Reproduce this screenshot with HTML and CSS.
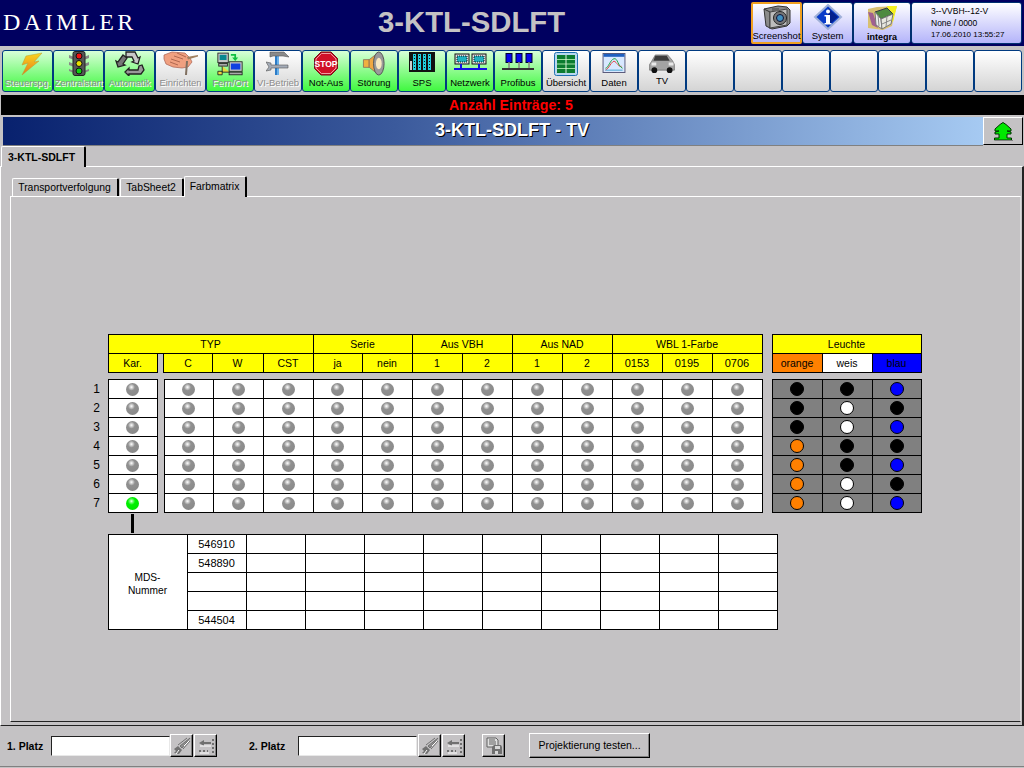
FILE: index.html
```html
<!DOCTYPE html>
<html lang="de">
<head>
<meta charset="utf-8">
<title>3-KTL-SDLFT</title>
<link rel="stylesheet" href="styles.css">
</head>
<body>
<div class="app">
<header class="top">
  <div class="logo">DAIMLER</div>
  <div class="plant">3-KTL-SDLFT</div>
  <div class="top-btns">
    <div class="tbtn w51 focus">
      <svg width="32" height="26" viewBox="0 0 32 26"><path d="M3 5l14-3 9 1 3 3v13l-3 3-15 3-6-3z" fill="#8a8a8a" stroke="#333"/><path d="M3 5l6 3v17" fill="none" stroke="#333"/><path d="M9 8l17-3v16l-17 3z" fill="#bdbdbd" stroke="#444"/><circle cx="19" cy="14" r="6.500" fill="#777" stroke="#222"/><circle cx="19" cy="14" r="3.500" fill="#3f8fc0" stroke="#113"/><rect x="11" y="4" width="7" height="3" fill="#666"/></svg>
      <span>Screenshot</span></div>
    <div class="tbtn w51">
      <svg width="32" height="26" viewBox="0 0 32 26"><path d="M16 1l13 12-13 12L3 13z" fill="#0a3cc8" stroke="#9fb0d8" stroke-width="2"/><path d="M16 4l10 9-10 9z" fill="#04208c"/><circle cx="16" cy="7.500" r="2" fill="#fff"/><path d="M14 11h4v8h1.500v1.500h-7V19H14v-6.500h-1.500V11z" fill="#fff"/></svg>
      <span>System</span></div>
    <div class="tbtn w58">
      <svg width="34" height="28" viewBox="0 0 34 28"><path d="M3 5l9-2 20-1-3 10-2 10-9 4-15-2z" fill="#d8c070"/><path d="M22 2l10 0-4 16-3-4z" fill="#f4f020"/><path d="M3 8l4 13 6 3-5-15z" fill="#a06090"/><path d="M10 8l12-4 6 6-12 5z" fill="#4e8a40" stroke="#334"/><path d="M10 8l6 7 1 10-6-4z" fill="#eee" stroke="#777"/><path d="M16 15l12-5-2 10-9 5z" fill="#e8e8e0" stroke="#777"/><path d="M13 11l1 11M22 12l-1 11M17 20l9-4" stroke="#888" fill="none"/></svg>
      <span class="b">integra</span></div>
    <div class="tbtn info"><p>3--VVBH--12-V</p><p>None / 0000</p><p class="date">17.06.2010 13:55:27</p></div>
  </div>
</header>

<nav class="toolbar">
  <div class="tool green w51 off">
    <svg width="30" height="25" viewBox="0 0 30 25"><defs><linearGradient id="bolt" x1="0" y1="0" x2="0" y2="1"><stop offset="0" stop-color="#f8d820"/><stop offset="1" stop-color="#e87818"/></linearGradient></defs><path d="M13 5l16-3-8 9 5-1-17 14 6-12-6 2z" fill="url(#bolt)" stroke="#b89a30" stroke-width=".5"/></svg>
    <span>Steuerspg.</span></div>
  <div class="tool green w51 off">
    <svg width="30" height="25" viewBox="0 0 30 25"><path d="M5 4l5 2v3l-5-2zM25 4l-5 2v3l5-2zM5 11l5 2v3l-5-2zM25 11l-5 2v3l5-2zM5 18l5 2v2l-5-2zM25 18l-5 2v2l5-2z" fill="#888"/><rect x="9" y="0.500" width="12" height="24" rx="2" fill="#555" stroke="#222"/><circle cx="15" cy="5" r="3" fill="#f01010" stroke="#111"/><circle cx="15" cy="12.500" r="3" fill="#e8e000" stroke="#111"/><circle cx="15" cy="20" r="3" fill="#10d010" stroke="#111"/></svg>
    <span>Zentralstart</span></div>
  <div class="tool green w51 off">
    <svg width="30" height="25" viewBox="0 0 30 25"><g stroke="#222" stroke-width="1.300"><path d="M11 1h9l3 6 2-1-2 7-6-2 2-1-2-4h-5l-1 2z" fill="#c8c8c8"/><path d="M8 4l4 3-4 6 2 1-7 2-2-6 2 1z" fill="#777"/><path d="M27 14l2 5-3 4H14v2l-4-4 4-4v2h9l1-4z" fill="#999"/></g></svg>
    <span>Automatik</span></div>
  <div class="tool white w51 off">
    <svg width="36" height="25" viewBox="0 0 36 25"><path d="M1 4l8-3 13 1 5 5 2 4-4 5-6 1-9-1-7-3-2-5z" fill="#f0a080" stroke="#a86050" stroke-width=".7"/><path d="M11 5l9 3M8 8l9 3M14 2l9 4M7 11l8 3" stroke="#b06850" fill="none"/><path d="M24 6l11-2v1.500l-10 3z" fill="#a08060"/><path d="M23 10l2 0-1 14h-2z" fill="#807060"/></svg>
    <span>Einrichten</span></div>
  <div class="tool green w48 off">
    <svg width="26" height="25" viewBox="0 0 30 28"><rect x="1" y="2" width="12" height="11" fill="#c8c8c8" stroke="#222"/><rect x="3" y="4" width="8" height="6" fill="#088890"/><rect x="2" y="14" width="10" height="3" fill="#aaa" stroke="#222"/><path d="M6 17v7h9M1 23h5v4H1z" fill="#e8d840" stroke="#222"/><rect x="14" y="12" width="15" height="11" fill="#c8c8c8" stroke="#222"/><rect x="16" y="14" width="11" height="7" fill="#1040e0"/><rect x="14" y="24" width="15" height="3" fill="#aaa" stroke="#222"/><path d="M16 3h6v4h2.500l-3.500 4-3.500-4H20V5h-4z" fill="#10c040"/></svg>
    <span>Fern/Ort</span></div>
  <div class="tool white w48 off">
    <svg width="24" height="25" viewBox="0 0 24 25"><rect x="9" y="5" width="4" height="19" fill="#2c7cc8"/><rect x="11" y="5" width="2" height="19" fill="#6ab0e8"/><path d="M4 1h14l5 5-6-1H7L4 6z" fill="#8a8a8a" stroke="#555" stroke-width=".6"/><path d="M0 11l5 1v2h17v3H5v2l-5 1 3-4z" fill="#a4acb8" stroke="#555" stroke-width=".6"/></svg>
    <span>VI-Betrieb</span></div>
  <div class="tool green w48">
    <svg width="24" height="25" viewBox="0 0 24 24"><path d="M7 .5h10l6.500 6.500v10L17 23.500H7L.5 17V7z" fill="#d01028" stroke="#701018"/><path d="M7.500 2h9l5.500 5.500v9L16.500 22h-9L2 16.500v-9z" fill="none" stroke="#f8c0c0" stroke-width=".8"/><text x="12" y="15.500" class="stop">STOP</text></svg>
    <span>Not-Aus</span></div>
  <div class="tool green w48">
    <svg width="24" height="25" viewBox="0 0 24 26"><path d="M1 9h6v8H1z" fill="#f0b040" stroke="#865" stroke-width=".8"/><path d="M7 9l9-7v22l-9-7z" fill="#f0a840" stroke="#865" stroke-width=".8"/><ellipse cx="17" cy="13" rx="5.500" ry="12" fill="#9a9a9a" stroke="#555"/><ellipse cx="17" cy="13" rx="3" ry="6" fill="#f8e8c0"/></svg>
    <span>Störung</span></div>
  <div class="tool green w48">
    <svg width="26" height="20" viewBox="0 0 26 20" class="pad"><rect width="26" height="20" fill="#111"/><g fill="#20d0e0"><rect x="4" y="2" width="3" height="16"/><rect x="9" y="2" width="3" height="16"/><rect x="14" y="2" width="3" height="16"/><rect x="19" y="2" width="3" height="16"/></g><path d="M2 3v14M5.500 3v14M10.500 3v14M15.500 3v14M20.500 3v14" stroke="#111" stroke-dasharray="1 2"/><rect x="1" y="9" width="2" height="9" fill="#ccc"/></svg>
    <span>SPS</span></div>
  <div class="tool green w48">
    <svg width="33" height="18" viewBox="0 0 33 18" class="pad3"><rect x="1" y="1" width="14" height="10" fill="#ddd" stroke="#111"/><rect x="3" y="3" width="10" height="6" fill="#20b0c0" stroke="#111" stroke-dasharray="1 1"/><rect x="18" y="1" width="14" height="10" fill="#ddd" stroke="#111"/><rect x="20" y="3" width="10" height="6" fill="#20b0c0" stroke="#111" stroke-dasharray="1 1"/><path d="M7 11v5M25 11v5" stroke="#1010e0" stroke-width="2"/><rect y="15" width="33" height="2" fill="#1010e0"/></svg>
    <span>Netzwerk</span></div>
  <div class="tool green w48">
    <svg width="32" height="18" viewBox="0 0 32 18" class="pad3"><rect x="4" y="0.500" width="6" height="9" fill="#0808e8" stroke="#003"/><rect x="14" y="0.500" width="6" height="9" fill="#0808e8" stroke="#003"/><rect x="24" y="0.500" width="6" height="9" fill="#0808e8" stroke="#003"/><path d="M7 9v7M17 9v7M27 9v7" stroke="#888" stroke-width="1.500"/><rect y="15" width="32" height="2" fill="#333"/></svg>
    <span>Profibus</span></div>
  <div class="tool white w48">
    <svg width="24" height="24" viewBox="0 0 24 24"><rect x=".5" y=".5" width="23" height="23" rx="2" fill="#b8d8f0" stroke="#2070b0"/><rect x="3" y="3" width="18" height="18" fill="#0c7c30"/><path d="M3 7.500h18M3 12h18M3 16.500h18" stroke="#a0e0a0"/><path d="M12 3v18" stroke="#e0f0e0"/></svg>
    <span>Übersicht</span></div>
  <div class="tool white w48">
    <svg width="24" height="20" viewBox="0 0 24 21" class="pad2"><rect x=".5" y=".5" width="23" height="20" fill="#d8e8ff" stroke="#557"/><rect x="1" y="1" width="22" height="3" fill="#2060c0"/><path d="M3 18c4-2 5-7 8-9s5 6 9 5" fill="none" stroke="#e04040"/><path d="M3 16c3 0 5-9 9-10s4 8 9 10" fill="none" stroke="#20a040"/><path d="M3 18h18" stroke="#40a0d0"/></svg>
    <span>Daten</span></div>
  <div class="tool white w48 tv">
    <svg width="28" height="21" viewBox="0 0 28 22"><path d="M1 12l2-3 4-7h13l5 6 2 4v6H1z" fill="#a4a4a4" stroke="#555" stroke-width=".6"/><path d="M7 3h12l3 5H5z" fill="#3c3c3c"/><path d="M3 10h5v3H3zM21 10h5v3h-5z" fill="#e8e8e8"/><circle cx="6" cy="18" r="3" fill="#111"/><circle cx="22" cy="18" r="3" fill="#111"/></svg>
    <span>TV</span></div>
  <div class="tool white w48"></div>
  <div class="tool white w48"></div>
  <div class="tool white w48"></div>
  <div class="tool white w48"></div>
  <div class="tool white w48"></div>
  <div class="tool white w48"></div>
  <div class="tool white w48"></div>
</nav>

<div class="alert">Anzahl Einträge: 5</div>

<div class="title-row">
  <div class="title-bar">3-KTL-SDLFT - TV</div>
  <div class="up-btn"><svg width="20" height="19" viewBox="0 0 20 19"><path d="M10 .5l3 2 5 4.500v2h-4l4 1v2h-4v4h4.500v2H1.500v-2H6v-4H2v-2l4-1H2V7l5-4.500z" fill="#00e800" stroke="#003000"/><path d="M2 18.500h18" stroke="#808080"/></svg></div>
</div>

<div class="outer-tabs"><div class="outer-tab">3-KTL-SDLFT</div></div>

<main class="outer-page">
  <div class="inner-tabs">
    <div class="inner-tab t1">Transportverfolgung</div>
    <div class="inner-tab t2">TabSheet2</div>
    <div class="inner-tab active">Farbmatrix</div>
  </div>
  <section class="inner-page">
    <div class="matrix">
      <div class="c y c-typ">TYP</div>
      <div class="c y c-ser">Serie</div>
      <div class="c y c-vbh">Aus VBH</div>
      <div class="c y c-nad">Aus NAD</div>
      <div class="c y c-wbl">WBL 1-Farbe</div>
      <div class="c y c-leu">Leuchte</div>

      <div class="c y c-kar">Kar.</div>
      <div class="c y c-first sh1">C</div><div class="c y sh1">W</div><div class="c y">CST</div><div class="c y">ja</div><div class="c y">nein</div><div class="c y">1</div><div class="c y">2</div><div class="c y">1</div><div class="c y">2</div><div class="c y n">0153</div><div class="c y n">0195</div><div class="c y n">0706</div>
      <div class="c orange c-lamp">orange</div><div class="c white">weis</div><div class="c blue">blau</div>

      <div class="vgap"></div>

      <div class="lbl">1</div><div class="c c-kar"><i class="led"></i></div>
      <div class="c c-first"><i class="led"></i></div><div class="c"><i class="led"></i></div><div class="c"><i class="led"></i></div><div class="c"><i class="led"></i></div><div class="c"><i class="led"></i></div><div class="c"><i class="led"></i></div><div class="c"><i class="led"></i></div><div class="c"><i class="led"></i></div><div class="c"><i class="led"></i></div><div class="c"><i class="led"></i></div><div class="c"><i class="led"></i></div><div class="c"><i class="led"></i></div>
      <div class="c g c-lamp"><i class="dot d-k"></i></div><div class="c g"><i class="dot d-k"></i></div><div class="c g"><i class="dot d-b"></i></div>

      <div class="lbl">2</div><div class="c c-kar"><i class="led"></i></div>
      <div class="c c-first"><i class="led"></i></div><div class="c"><i class="led"></i></div><div class="c"><i class="led"></i></div><div class="c"><i class="led"></i></div><div class="c"><i class="led"></i></div><div class="c"><i class="led"></i></div><div class="c"><i class="led"></i></div><div class="c"><i class="led"></i></div><div class="c"><i class="led"></i></div><div class="c"><i class="led"></i></div><div class="c"><i class="led"></i></div><div class="c"><i class="led"></i></div>
      <div class="c g c-lamp"><i class="dot d-k"></i></div><div class="c g"><i class="dot d-w"></i></div><div class="c g"><i class="dot d-k"></i></div>

      <div class="lbl">3</div><div class="c c-kar"><i class="led"></i></div>
      <div class="c c-first"><i class="led"></i></div><div class="c"><i class="led"></i></div><div class="c"><i class="led"></i></div><div class="c"><i class="led"></i></div><div class="c"><i class="led"></i></div><div class="c"><i class="led"></i></div><div class="c"><i class="led"></i></div><div class="c"><i class="led"></i></div><div class="c"><i class="led"></i></div><div class="c"><i class="led"></i></div><div class="c"><i class="led"></i></div><div class="c"><i class="led"></i></div>
      <div class="c g c-lamp"><i class="dot d-k"></i></div><div class="c g"><i class="dot d-w"></i></div><div class="c g"><i class="dot d-b"></i></div>

      <div class="lbl">4</div><div class="c c-kar"><i class="led"></i></div>
      <div class="c c-first"><i class="led"></i></div><div class="c"><i class="led"></i></div><div class="c"><i class="led"></i></div><div class="c"><i class="led"></i></div><div class="c"><i class="led"></i></div><div class="c"><i class="led"></i></div><div class="c"><i class="led"></i></div><div class="c"><i class="led"></i></div><div class="c"><i class="led"></i></div><div class="c"><i class="led"></i></div><div class="c"><i class="led"></i></div><div class="c"><i class="led"></i></div>
      <div class="c g c-lamp"><i class="dot d-o"></i></div><div class="c g"><i class="dot d-k"></i></div><div class="c g"><i class="dot d-k"></i></div>

      <div class="lbl">5</div><div class="c c-kar"><i class="led"></i></div>
      <div class="c c-first"><i class="led"></i></div><div class="c"><i class="led"></i></div><div class="c"><i class="led"></i></div><div class="c"><i class="led"></i></div><div class="c"><i class="led"></i></div><div class="c"><i class="led"></i></div><div class="c"><i class="led"></i></div><div class="c"><i class="led"></i></div><div class="c"><i class="led"></i></div><div class="c"><i class="led"></i></div><div class="c"><i class="led"></i></div><div class="c"><i class="led"></i></div>
      <div class="c g c-lamp"><i class="dot d-o"></i></div><div class="c g"><i class="dot d-k"></i></div><div class="c g"><i class="dot d-b"></i></div>

      <div class="lbl">6</div><div class="c c-kar"><i class="led"></i></div>
      <div class="c c-first"><i class="led"></i></div><div class="c"><i class="led"></i></div><div class="c"><i class="led"></i></div><div class="c"><i class="led"></i></div><div class="c"><i class="led"></i></div><div class="c"><i class="led"></i></div><div class="c"><i class="led"></i></div><div class="c"><i class="led"></i></div><div class="c"><i class="led"></i></div><div class="c"><i class="led"></i></div><div class="c"><i class="led"></i></div><div class="c"><i class="led"></i></div>
      <div class="c g c-lamp"><i class="dot d-o"></i></div><div class="c g"><i class="dot d-w"></i></div><div class="c g"><i class="dot d-k"></i></div>

      <div class="lbl">7</div><div class="c c-kar"><i class="led on"></i></div>
      <div class="c c-first"><i class="led"></i></div><div class="c"><i class="led"></i></div><div class="c"><i class="led"></i></div><div class="c"><i class="led"></i></div><div class="c"><i class="led"></i></div><div class="c"><i class="led"></i></div><div class="c"><i class="led"></i></div><div class="c"><i class="led"></i></div><div class="c"><i class="led"></i></div><div class="c"><i class="led"></i></div><div class="c"><i class="led"></i></div><div class="c"><i class="led"></i></div>
      <div class="c g c-lamp"><i class="dot d-o"></i></div><div class="c g"><i class="dot d-w"></i></div><div class="c g"><i class="dot d-b"></i></div>
    </div>

    <div class="connector"></div>

    <div class="mds">
      <div class="c m-head">MDS-<br>Nummer</div>
      <div class="c">546910</div><div class="c"></div><div class="c"></div><div class="c"></div><div class="c"></div><div class="c"></div><div class="c"></div><div class="c"></div><div class="c"></div><div class="c"></div>
      <div class="c">548890</div><div class="c"></div><div class="c"></div><div class="c"></div><div class="c"></div><div class="c"></div><div class="c"></div><div class="c"></div><div class="c"></div><div class="c"></div>
      <div class="c"></div><div class="c"></div><div class="c"></div><div class="c"></div><div class="c"></div><div class="c"></div><div class="c"></div><div class="c"></div><div class="c"></div><div class="c"></div>
      <div class="c"></div><div class="c"></div><div class="c"></div><div class="c"></div><div class="c"></div><div class="c"></div><div class="c"></div><div class="c"></div><div class="c"></div><div class="c"></div>
      <div class="c">544504</div><div class="c"></div><div class="c"></div><div class="c"></div><div class="c"></div><div class="c"></div><div class="c"></div><div class="c"></div><div class="c"></div><div class="c"></div>
    </div>
  </section>
</main>

<footer class="foot">
  <label class="plabel p1">1. Platz</label>
  <div class="field"></div>
  <div class="ibtn"><svg width="18" height="18" viewBox="0 0 18 18"><path d="M17 1L7 9l2 2zM14 1L5 8M17 4l-7 8" stroke="#707070" fill="#909090"/><path d="M5 9l4 4-3 4-5-1 2-2-2-2z" fill="#707070"/><path d="M3 17l3-4M11 9l5-5" stroke="#fff"/></svg></div>
  <div class="ibtn"><svg width="18" height="18" viewBox="0 0 18 18"><path d="M2 6l5-3v2h7v2H7v2z" fill="#707070"/><path d="M16 2v14M2 14h9" stroke="#707070" stroke-width="2" stroke-dasharray="2 2"/><path d="M3 9h11M3 16h9" stroke="#fff"/></svg></div>
  <label class="plabel p2">2. Platz</label>
  <div class="field"></div>
  <div class="ibtn b2"><svg width="18" height="18" viewBox="0 0 18 18"><path d="M17 1L7 9l2 2zM14 1L5 8M17 4l-7 8" stroke="#707070" fill="#909090"/><path d="M5 9l4 4-3 4-5-1 2-2-2-2z" fill="#707070"/><path d="M3 17l3-4M11 9l5-5" stroke="#fff"/></svg></div>
  <div class="ibtn"><svg width="18" height="18" viewBox="0 0 18 18"><path d="M2 6l5-3v2h7v2H7v2z" fill="#707070"/><path d="M16 2v14M2 14h9" stroke="#707070" stroke-width="2" stroke-dasharray="2 2"/><path d="M3 9h11M3 16h9" stroke="#fff"/></svg></div>
  <div class="ibtn save"><svg width="18" height="18" viewBox="0 0 18 18"><path d="M2 1h9l2 2v7H2z" fill="#e0e0e0" stroke="#606060"/><path d="M4 3h6M4 5h7M4 7h7" stroke="#606060"/><path d="M9 8h7l1 2v7H7v-7z" fill="#707070"/><path d="M10 9h5v3h-5zM10 14h3v3h-3z" fill="#d8d8d8"/></svg></div>
  <div class="test-btn">Projektierung testen...</div>
</footer>
</div>
</body>
</html>
```
FILE: styles.css
```css
* { box-sizing: border-box; }
html, body { margin: 0; height: 100%; }
body { background: #c4c2c4; font-family: "Liberation Sans", Arial, sans-serif; font-size: 10px; color: #000; overflow: hidden; }
.app { width: 1024px; height: 768px; display: flex; flex-direction: column; }

.top { height: 46px; background: #000060; display: flex; align-items: center; flex: none; }
.logo { width: 240px; padding: 0 0 2px 3px; font: 24px "Liberation Serif", serif; letter-spacing: 3.500px; color: #fff; }
.plant { width: 462px; padding-left: 138px; font-weight: bold; font-size: 29.300px; color: #c4c2c4; padding-bottom: 2px; white-space: nowrap; flex: none; }
.top-btns { display: flex; margin-left: 49px; height: 42px; }
.tbtn { height: 42px; background: linear-gradient(#fff, #b4b4fa); border: 1px solid #003070; border-radius: 3px; display: flex; flex-direction: column; align-items: center; justify-content: space-between; font-size: 9.500px; padding-bottom: 3px; white-space: nowrap; }
.tbtn svg { display: block; margin-top: 1px; flex: none; }
.focus { border: 2px solid #f0a020; border-radius: 2px; }
.focus svg { margin-top: 0; }
.w51 { width: 51px; flex: none; }
.w58 { width: 58px; flex: none; }
.w48 { width: 48px; flex: none; }
.b { font-weight: bold; font-size: 9px; line-height: 10px; }
.info { width: 111px; display: block; padding: 3px 0 0 19px; font-size: 8.500px; line-height: 11.500px; }
.info p { margin: 0; }
.info .date { font-size: 8px; }

.toolbar { display: flex; height: 43px; padding-left: 2px; margin-top: 4px; flex: none; }
.tool { height: 42px; border: 1px solid #003a80; border-radius: 3px; display: flex; flex-direction: column; align-items: center; justify-content: flex-end; font-size: 9.500px; padding-bottom: 3px; white-space: nowrap; }
.tool svg { flex: none; margin-bottom: 1px; }
.tool .pad { margin-bottom: 5px; }
.tool .pad2 { margin-bottom: 4px; }
.tool .pad3 { margin-bottom: 6px; }
.tool span { line-height: 11px; }
.green { background: linear-gradient(#d8ffd8, #40f840); }
.white { background: linear-gradient(#fff, #d4d4d4); }
.off span { color: #8c8c8c; text-shadow: 1px 1px 0 #fff; }
.tv { padding-bottom: 5px; }

.alert { height: 20px; margin: 2px 0 0 1px; padding-right: 3px; background: #000; color: #f00; font-weight: bold; font-size: 14.200px; line-height: 20px; text-align: center; flex: none; }

.title-row { display: flex; height: 29px; margin: 2px 1px 0 3px; flex: none; }
.title-bar { width: 980px; padding-left: 38px; background: linear-gradient(90deg, #08216e, #3b5a9c 40%, #a6caf2); color: #fff; font-weight: bold; font-size: 18px; line-height: 27px; text-align: center; text-shadow: 1px 1px 0 #000; border-bottom: 1px solid #808080; }
.up-btn { width: 40px; height: 28px; background: #c4c2c4; border: 1px solid; border-color: #fff #000 #000 #fff; display: flex; align-items: center; justify-content: center; }

.outer-tabs { height: 20px; display: flex; flex: none; }
.outer-tab { width: 85px; height: 21px; margin-left: 1px; border-top: 1px solid #fff; border-left: 1px solid #fff; border-right: 2px solid #000; border-radius: 2px 2px 0 0; font-weight: bold; font-size: 10.500px; line-height: 20px; padding-left: 6px; white-space: nowrap; position: relative; z-index: 1; background: #c4c2c4; }

.outer-page { flex: none; height: 560px; border-top: 1px solid #fff; border-left: 1px solid #fff; border-right: 2px solid #222; border-bottom: 1px solid #222; padding: 8px 1px 3px 9px; display: flex; flex-direction: column; }

.inner-tabs { display: flex; align-items: flex-end; height: 21px; padding-left: 2px; flex: none; font-size: 10.400px; }
.inner-tab { height: 18px; border-top: 1px solid #fff; border-left: 1px solid #fff; border-right: 2px solid #000; border-radius: 2px 2px 0 0; line-height: 17px; text-align: center; white-space: nowrap; padding-right: 1px; }
.t1 { width: 107px; }
.t2 { width: 64px; margin-left: 1px; }
.inner-tab.active { width: 63px; height: 21px; line-height: 20px; background: #c4c2c4; margin-bottom: -1px; position: relative; z-index: 1; }

.inner-page { flex: 1; border-top: 1px solid #fff; border-left: 1px solid #fff; border-right: 1px solid #dcdcdc; border-bottom: 1px solid #222; padding: 137px 0 0 77px; }

.matrix { display: grid; grid-template-columns: 20px 49px 7px 49px 50px 50px 49px 50px 50px 50px 50px 50px 50px 50px 50px 10px 50px 50px 49px; grid-template-rows: 19px 19px 7px; grid-auto-rows: 19px; font-size: 10.500px; }
.c { background: #fff; border: 1px solid #000; margin: 0 -1px -1px 0; padding-right: 1px; display: flex; align-items: center; justify-content: center; white-space: nowrap; }
.y { background: #ff0; }
.n { font-size: 11px; }
.orange { background: #ff8000; }
.white.c { background: #fff; }
.blue { background: #00f; }
.g { background: #808080; }
.c-typ { grid-column: 2 / 7; }
.c-ser { grid-column: 7 / 9; }
.c-vbh { grid-column: 9 / 11; }
.c-nad { grid-column: 11 / 13; }
.c-wbl { grid-column: 13 / 16; }
.c-leu { grid-column: 17 / 20; }
.c-kar { grid-column: 2; }
.c-first { grid-column: 4; }
.c-lamp { grid-column: 17; }
.sh1 { margin-left: -1px; }
.vgap { grid-column: 1 / -1; }
.lbl { grid-column: 1; display: flex; align-items: center; justify-content: flex-end; padding: 0 8px 0 0; font-size: 12px; }
.led { display: block; width: 13px; height: 13px; border-radius: 50%; background: radial-gradient(circle at 42% 32%, #fff 0, #d8d8d8 11%, #909090 30%, #868686 100%); }
.led.on { background: radial-gradient(circle at 42% 32%, #f0fff0 0, #80ff80 12%, #00f000 32%, #00e000 100%); }
.dot { display: block; width: 14px; height: 14px; border-radius: 50%; border: 1px solid #000; }
.d-k { background: #000; }
.d-w { background: #fff; }
.d-b { background: #00f; }
.d-o { background: #ff8000; }

.connector { width: 3px; height: 19px; margin: 2px 0 1px 43px; background: #000; }

.mds { margin-left: 20px; display: grid; grid-template-columns: 79px repeat(10, 59px); grid-auto-rows: 19px; font-size: 11px; }
.m-head { grid-row: 1 / 6; line-height: 13px; text-align: center; font-size: 10.200px; padding-top: 3px; }

.foot { height: 41px; border-bottom: 1px solid #808080; display: flex; align-items: center; flex: none; padding-bottom: 1px; }
.plabel { font-weight: bold; font-size: 10.500px; white-space: nowrap; }
.p1 { margin-left: 7px; width: 44px; }
.p2 { margin-left: 31px; width: 49px; }
.field { width: 119px; height: 20px; background: #fff; border: 1px solid; border-color: #222 #e8e8e8 #e8e8e8 #222; }
.ibtn { width: 23px; height: 23px; margin-right: 1px; background: #c4c2c4; border: 1px solid; border-color: #fff #000 #000 #fff; box-shadow: inset -1px -1px 0 #808080; display: flex; align-items: center; justify-content: center; }
.b2 { margin-left: 1px; }
.save { margin-left: 16px; }
.test-btn { width: 121px; height: 25px; margin-left: 23px; border: 1px solid; border-color: #fff #000 #000 #fff; box-shadow: inset -1px -1px 0 #808080; text-align: center; line-height: 22px; font-size: 10.500px; }
.stop { fill: #fff; font-size: 8.500px; font-weight: bold; text-anchor: middle; font-family: "Liberation Sans", sans-serif; }
```
